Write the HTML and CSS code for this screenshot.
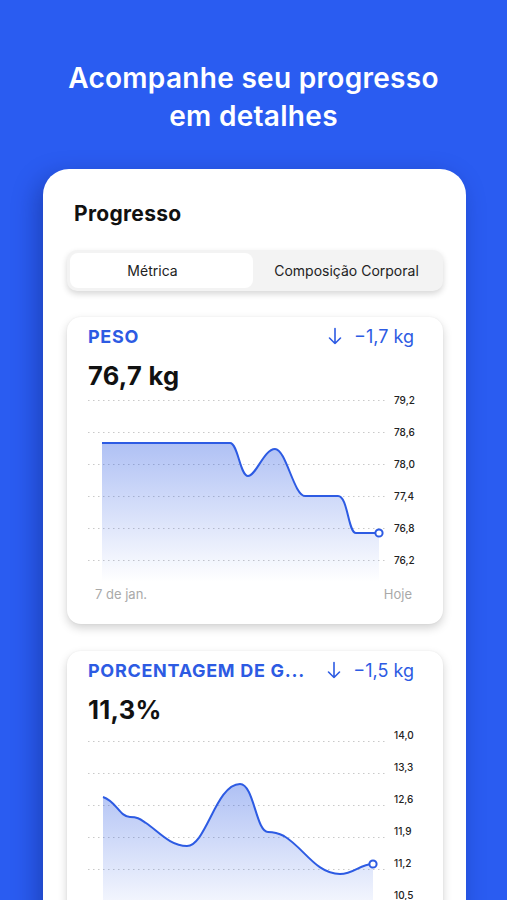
FILE: index.html
```html
<!DOCTYPE html>
<html lang="pt-BR">
<head>
<meta charset="utf-8">
<title>Progresso</title>
<link rel="stylesheet" href="styles.css">
</head>
<body>
<main class="screen">
  <h1 class="headline">Acompanhe seu progresso<br>em detalhes</h1>
  <section class="sheet">
    <h2 class="sheet-title">Progresso</h2>
    <div class="segmented">
      <div class="seg seg-active seg-first">Métrica</div>
      <div class="seg">Composição Corporal</div>
    </div>

    <article class="metric-card">
      <header class="metric-head">
        <span class="metric-name">PESO</span>
        <span class="metric-delta">
          <svg class="arrow" width="14" height="18" viewBox="0 0 14 18" fill="none" stroke="currentColor" stroke-width="1.6" stroke-linecap="round" stroke-linejoin="round"><path d="M7 1.5V16.5M1.5 11L7 16.5L12.5 11"/></svg>
          −1,7 kg
        </span>
      </header>
      <div class="metric-value">76,7 kg</div>
      <div class="chart">
        <svg class="plot" width="297" height="190" viewBox="0 0 297 190">
          <defs>
            <linearGradient id="g1" x1="0" y1="0" x2="0" y2="1">
              <stop offset="0" stop-color="#2d5be3" stop-opacity="0.38"/>
              <stop offset="1" stop-color="#2d5be3" stop-opacity="0"/>
            </linearGradient>
          </defs>
          <g stroke="#c9c9c9" stroke-width="1" stroke-dasharray="1.5 3.5">
            <line x1="0" y1="8.5" x2="297" y2="8.5"/>
            <line x1="0" y1="40.5" x2="297" y2="40.5"/>
            <line x1="0" y1="72.5" x2="297" y2="72.5"/>
            <line x1="0" y1="104.5" x2="297" y2="104.5"/>
            <line x1="0" y1="136.5" x2="297" y2="136.5"/>
            <line x1="0" y1="168.5" x2="297" y2="168.5"/>
          </g>
          <path d="M14 51 L142 51 C150 51 152 84 160 84 C168 84 176 57 187 57 C198 57 206 104 217 104 L250 104 C260 104 260 141 268 141 L291 141 L291 190 L14 190 Z" fill="url(#g1)"/>
          <path d="M14 51 L142 51 C150 51 152 84 160 84 C168 84 176 57 187 57 C198 57 206 104 217 104 L250 104 C260 104 260 141 268 141 L291 141" fill="none" stroke="#2d5be3" stroke-width="2"/>
          <circle cx="291" cy="141" r="3.6" fill="#fff" stroke="#2d5be3" stroke-width="2"/>
        </svg>
        <div class="axis">
          <span>79,2</span><span>78,6</span><span>78,0</span><span>77,4</span><span>76,8</span><span>76,2</span>
        </div>
      </div>
      <footer class="dates">
        <span>7 de jan.</span>
        <span>Hoje</span>
      </footer>
    </article>

    <article class="metric-card">
      <header class="metric-head">
        <span class="metric-name">PORCENTAGEM DE G...</span>
        <span class="metric-delta">
          <svg class="arrow" width="14" height="18" viewBox="0 0 14 18" fill="none" stroke="currentColor" stroke-width="1.6" stroke-linecap="round" stroke-linejoin="round"><path d="M7 1.5V16.5M1.5 11L7 16.5L12.5 11"/></svg>
          −1,5 kg
        </span>
      </header>
      <div class="metric-value">11,3%</div>
      <div class="chart chart-second">
        <svg class="plot" width="297" height="190" viewBox="0 0 297 190">
          <defs>
            <linearGradient id="g2" x1="0" y1="0" x2="0" y2="1">
              <stop offset="0" stop-color="#2d5be3" stop-opacity="0.38"/>
              <stop offset="1" stop-color="#2d5be3" stop-opacity="0"/>
            </linearGradient>
          </defs>
          <g stroke="#c9c9c9" stroke-width="1" stroke-dasharray="1.5 3.5">
            <line x1="0" y1="8.5" x2="297" y2="8.5"/>
            <line x1="0" y1="40.5" x2="297" y2="40.5"/>
            <line x1="0" y1="72.5" x2="297" y2="72.5"/>
            <line x1="0" y1="104.5" x2="297" y2="104.5"/>
            <line x1="0" y1="136.5" x2="297" y2="136.5"/>
            <line x1="0" y1="168.5" x2="297" y2="168.5"/>
          </g>
          <path d="M15 64 C28 68 32 84 42 84 C50 84 52 86 58 90 C70 98 82 113 99 113 C118 113 128 51 152 51 C166 51 168 99 180 99 C186 99 190 100 196 103 C216 115 228 141 252 141 C266 141 272 131 285 131 L285 190 L15 190 Z" fill="url(#g2)"/>
          <path d="M15 64 C28 68 32 84 42 84 C50 84 52 86 58 90 C70 98 82 113 99 113 C118 113 128 51 152 51 C166 51 168 99 180 99 C186 99 190 100 196 103 C216 115 228 141 252 141 C266 141 272 131 285 131" fill="none" stroke="#2d5be3" stroke-width="2"/>
          <circle cx="285" cy="131" r="3.6" fill="#fff" stroke="#2d5be3" stroke-width="2"/>
        </svg>
        <div class="axis">
          <span>14,0</span><span>13,3</span><span>12,6</span><span>11,9</span><span>11,2</span><span>10,5</span>
        </div>
      </div>
    </article>
  </section>
</main>
</body>
</html>
```

FILE: styles.css
```css
* { box-sizing: border-box; }

html, body {
  margin: 0;
  padding: 0;
  height: 100%;
}

body {
  background: #2a5cf1;
  font-family: "Inter", "Noto Sans", sans-serif;
  overflow: hidden;
}

.screen {
  width: 507px;
  height: 900px;
  overflow: hidden;
  padding-top: 59px;
}

.headline {
  margin: 0;
  text-align: center;
  color: #fff;
  font-size: 28px;
  line-height: 38px;
  font-weight: 600;
  letter-spacing: 0.3px;
}

.sheet {
  margin: 34px 41px 0 43px;
  background: #fff;
  border-radius: 26px;
  padding: 31px 23px 40px 24px;
  box-shadow: -6px 8px 24px rgba(10, 20, 90, 0.35);
  min-height: 760px;
}

.sheet-title {
  margin: 0 0 0 7px;
  font-size: 21px;
  line-height: 28px;
  font-weight: 700;
  letter-spacing: 0.3px;
  color: #111;
}

.segmented {
  margin-top: 22px;
  display: grid;
  grid-template-columns: 183px 1fr;
  padding: 3px;
  height: 41px;
  background: #f3f3f3;
  border-radius: 10px;
  box-shadow: 0 3px 6px rgba(0, 0, 0, 0.16);
}

.seg {
  display: flex;
  align-items: center;
  justify-content: center;
  font-size: 14px;
  color: #222;
  border-radius: 8px;
}

.seg-first { padding-right: 18px; }

.seg-active {
  background: #fff;
}

.metric-card {
  margin-top: 26px;
  background: #fff;
  border-radius: 14px;
  padding: 7px 29px 22px 21px;
  box-shadow: 0 4px 10px rgba(0, 0, 0, 0.18), 0 0 2px rgba(0, 0, 0, 0.06);
}

.metric-card + .metric-card {
  margin-top: 27px;
}

.metric-head {
  display: flex;
  justify-content: space-between;
  align-items: center;
  height: 24px;
}

.metric-name {
  color: #2d5be3;
  font-size: 18px;
  font-weight: 700;
  letter-spacing: 0.7px;
}

.metric-delta {
  display: flex;
  align-items: center;
  gap: 12px;
  color: #2d5be3;
  font-size: 18px;
  font-weight: 400;
}

.arrow { display: block; }

.metric-value {
  margin-top: 11px;
  font-size: 25.5px;
  line-height: 34px;
  font-weight: 700;
  letter-spacing: 0.3px;
  color: #111;
}

.chart {
  display: grid;
  grid-template-columns: 297px 1fr;
  margin-top: -1px;
}

.chart-second {
  margin-top: 6px;
}

.plot { display: block; }

.axis {
  display: flex;
  flex-direction: column;
  padding-left: 9px;
  margin-top: -8px;
}

.chart-second .axis {
  margin-top: -14px;
}

.axis span {
  display: block;
  height: 32px;
  line-height: 32px;
  font-size: 10px;
  font-weight: 500;
  color: #222;
}

.dates {
  display: flex;
  justify-content: space-between;
  margin: 4px 2px 0 7px;
  font-size: 13px;
  line-height: 16px;
  color: #a9a9a9;
}
```
